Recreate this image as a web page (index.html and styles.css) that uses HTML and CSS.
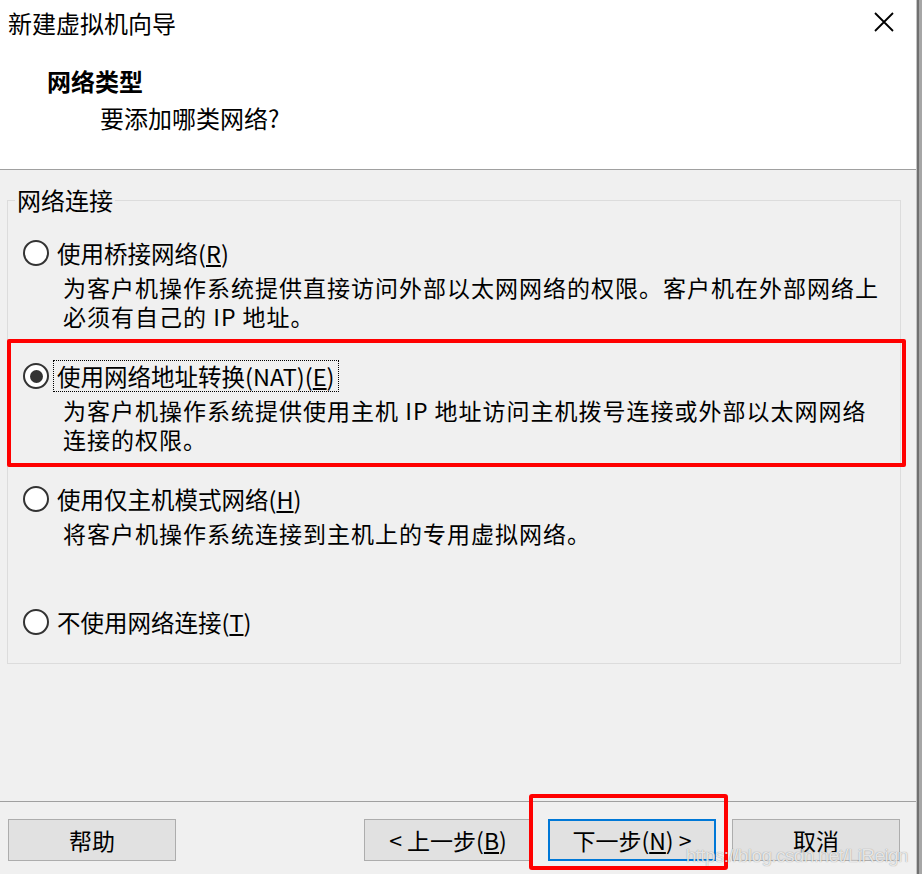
FILE: index.html
```html
<!DOCTYPE html>
<html lang="zh-CN">
<head>
    <meta charset="UTF-8">
    <meta name="viewport" content="width=device-width, initial-scale=1.0">
    <title>新建虚拟机向导</title>
    <link rel="stylesheet" href="styles.css">
</head>
<body>
    <div class="window">
        <div class="dialog">
            <header class="head">
                <div class="titlebar">
                    <span class="title">新建虚拟机向导</span>
                    <svg class="close" width="22" height="22" viewBox="0 0 22 22">
                        <path d="M2 2 L20 20 M20 2 L2 20" stroke="#000" stroke-width="1.8" fill="none"/>
                    </svg>
                </div>
                <h2 class="step">网络类型</h2>
                <p class="step-sub">要添加哪类网络?</p>
            </header>

            <main class="body">
                <fieldset class="group">
                    <legend>网络连接</legend>

                    <div class="option option-first">
                        <div class="opt-row">
                            <span class="radio"></span>
                            <span class="opt-label">使用桥接网络(<u>R</u>)</span>
                        </div>
                        <p class="opt-desc">
                            <span class="desc-line">为客户机操作系统提供直接访问外部以太网网络的权限。客户机在外部网络上</span>
                            <span class="desc-line">必须有自己的 IP 地址。</span>
                        </p>
                    </div>

                    <div class="option option-marked">
                        <div class="opt-row">
                            <span class="radio radio-on"></span>
                            <span class="opt-label opt-focus">使用网络地址转换(NAT)(<u>E</u>)</span>
                        </div>
                        <p class="opt-desc">
                            <span class="desc-line">为客户机操作系统提供使用主机 IP 地址访问主机拨号连接或外部以太网网络</span>
                            <span class="desc-line">连接的权限。</span>
                        </p>
                    </div>

                    <div class="option">
                        <div class="opt-row">
                            <span class="radio"></span>
                            <span class="opt-label">使用仅主机模式网络(<u>H</u>)</span>
                        </div>
                        <p class="opt-desc">
                            <span class="desc-line">将客户机操作系统连接到主机上的专用虚拟网络。</span>
                        </p>
                    </div>

                    <div class="option option-last">
                        <div class="opt-row">
                            <span class="radio"></span>
                            <span class="opt-label">不使用网络连接(<u>T</u>)</span>
                        </div>
                    </div>
                </fieldset>
            </main>

            <footer class="foot">
                <button class="btn">帮助</button>
                <button class="btn btn-back">&lt; 上一步(<u>B</u>)</button>
                <button class="btn btn-next">下一步(<u>N</u>) &gt;</button>
                <button class="btn">取消</button>
                <span class="watermark">https://blog.csdn.net/LiReign</span>
            </footer>
        </div>
        <div class="edge"></div>
    </div>
</body>
</html>
```

FILE: styles.css
```css
body {
    margin: 0;
    padding: 0;
    font-family: "Noto Sans CJK SC", "Microsoft YaHei", sans-serif;
    color: #000;
    background-color: #f0f0f0;
}

.window {
    display: flex;
    width: 922px;
    height: 874px;
    overflow: hidden;
}

.dialog {
    width: 916px;
    display: flex;
    flex-direction: column;
    background-color: #f0f0f0;
}

.edge {
    width: 5px;
    border-left: 1px solid #c4c4c4;
    background: linear-gradient(to right, #707070 0, #707070 2px, #a6a6a6 2px);
}

/* header */
.head {
    height: 169px;
    background-color: #fff;
    border-bottom: 1px solid #a0a0a0;
    box-sizing: content-box;
}

.titlebar {
    display: flex;
    justify-content: space-between;
    align-items: flex-start;
    padding: 8px 21px 0 8px;
}

.title {
    font-size: 24px;
    line-height: 30px;
}

.close {
    margin-top: 3px;
}

.step {
    margin: 28px 0 0 47px;
    font-size: 24px;
    font-weight: bold;
    line-height: 30px;
}

.step-sub {
    margin: 7px 0 0 100px;
    font-size: 24px;
    line-height: 30px;
}

/* body */
.body {
    flex: 1;
    padding: 15px 15px 0 7px;
}

.group {
    margin: 0;
    padding: 0 0 26px 0;
    border: 1px solid #dcdcdc;
}

.group legend {
    margin-left: 7px;
    padding: 0 2px;
    font-size: 24px;
    line-height: 30px;
}

.option {
    position: relative;
    margin: 30px 0 0 15px;
}

.option-first {
    margin-top: 23px;
}

.option-last {
    margin-top: 59px;
}

.option-marked::after {
    content: "";
    position: absolute;
    left: -16px;
    right: -6px;
    top: -22px;
    bottom: -13px;
    border: 4px solid #ff0000;
    border-radius: 2px;
}

.opt-row {
    display: flex;
    align-items: center;
    height: 30px;
}

.radio {
    width: 26px;
    height: 26px;
    box-sizing: border-box;
    border: 2.5px solid #333;
    border-radius: 50%;
    background-color: #fff;
    display: flex;
    align-items: center;
    justify-content: center;
}

.radio-on::before {
    content: "";
    width: 13px;
    height: 13px;
    border-radius: 50%;
    background-color: #333;
}

.opt-label {
    margin-left: 5px;
    padding: 0 3px;
    font-size: 23.5px;
    line-height: 30px;
}

.opt-focus {
    outline: 1px dotted #000;
}

.opt-desc {
    margin: 5px 0 0 40px;
    font-size: 23px;
    letter-spacing: 1px;
    white-space: nowrap;
}

.desc-line {
    display: block;
    height: 29px;
    line-height: 29px;
}

u {
    text-underline-offset: 2px;
}

/* footer */
.foot {
    position: relative;
    height: 73px;
    border-top: 1px solid #a0a0a0;
    display: flex;
    align-items: flex-start;
    gap: 16px;
    padding: 17px 16px 0 8px;
    box-sizing: border-box;
}

.btn {
    width: 168px;
    height: 42px;
    border: 1px solid #adadad;
    background-color: #e1e1e1;
    font-family: inherit;
    font-size: 23px;
    color: #000;
    padding: 0;
}

.btn-back {
    margin-left: auto;
}

.btn-next {
    position: relative;
    border: 2px solid #0078d7;
}

.btn-next::after {
    content: "";
    position: absolute;
    left: -21px;
    right: -14px;
    top: -27px;
    bottom: -11px;
    border: 4px solid #ff0000;
    border-radius: 3px;
}

.watermark {
    position: absolute;
    right: 8px;
    bottom: 7px;
    font-family: "Liberation Sans", Arial, sans-serif;
    font-size: 19px;
    letter-spacing: -0.6px;
    color: rgba(255, 255, 255, 0.8);
    text-shadow: 0 0 1px rgba(0, 0, 0, 0.45);
}
```
